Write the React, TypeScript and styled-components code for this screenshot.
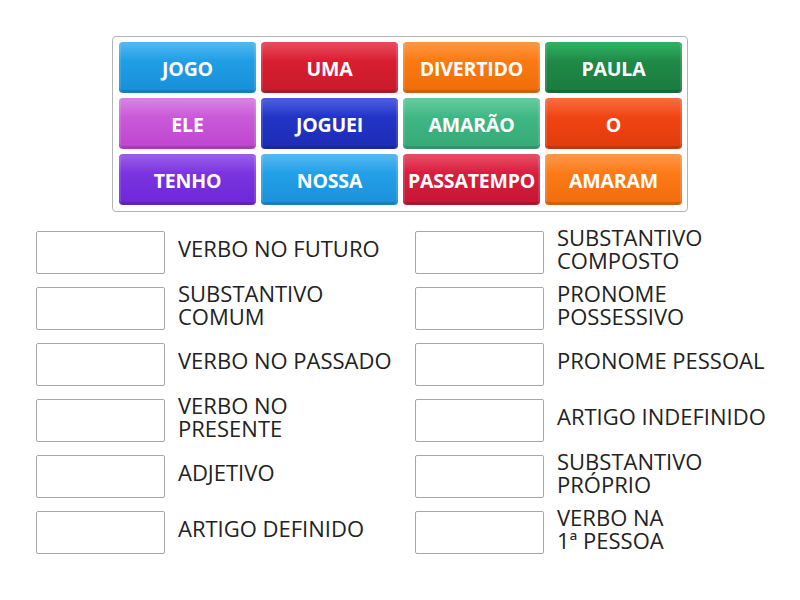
import React from "react";
import styled, { createGlobalStyle } from "styled-components";

const GlobalStyle = createGlobalStyle`
  body {
    margin: 0;
    background: #ffffff;
    font-family: "Open Sans", "Liberation Sans", sans-serif;
  }
`;

const Page = styled.div`
  width: 800px;
  height: 600px;
  display: flex;
  flex-direction: column;
  align-items: center;
  padding-top: 36px;
  box-sizing: border-box;
`;

const Bank = styled.div`
  width: 576px;
  box-sizing: border-box;
  border: 1px solid #b4b4b4;
  border-radius: 4px;
  padding: 5px 5px 6px 6px;
  display: grid;
  grid-template-columns: repeat(4, 137px);
  grid-auto-rows: 51px;
  gap: 5px;
`;

const Tile = styled.div<{ $color: string; $light: string; $dark: string }>`
  display: flex;
  align-items: center;
  justify-content: center;
  border-radius: 4px;
  background: linear-gradient(to bottom, ${(p) => p.$light} 0%, ${(p) => p.$color} 35%, ${(p) => p.$dark} 100%);
  border-top: 2px solid ${(p) => p.$light};
  box-shadow: inset 0 -3px 0 rgba(0, 0, 0, 0.12), inset 2px 0 0 rgba(255, 255, 255, 0.12),
    inset -2px 0 0 rgba(255, 255, 255, 0.12);
  box-sizing: border-box;
  color: #ffffff;
  font-weight: 700;
  font-size: 19.5px;
  letter-spacing: -0.2px;
  white-space: nowrap;
`;

const Targets = styled.div`
  margin-top: 19px;
  width: 728px;
  display: grid;
  grid-template-columns: 349px 349px;
  column-gap: 30px;
  row-gap: 13px;
  grid-auto-flow: column;
  grid-template-rows: repeat(6, 43px);
`;

const Row = styled.div`
  display: flex;
  align-items: center;
`;

const Slot = styled.div`
  width: 129px;
  height: 43px;
  flex: none;
  box-sizing: border-box;
  border: 1px solid #a8a8a8;
  border-radius: 2px;
  background: #fff;
`;

const Label = styled.div`
  margin-left: 13px;
  margin-top: -8px;
  font-size: 22px;
  line-height: 23px;
  color: #222222;
  white-space: nowrap;
`;

const tiles = [
  { t: "JOGO", c: "#1f9ee6", l: "#4fb6f0", d: "#178ed8" },
  { t: "UMA", c: "#d81e30", l: "#e8485a", d: "#c81a2c" },
  { t: "DIVERTIDO", c: "#fb7a12", l: "#fd9540", d: "#ef6c08" },
  { t: "PAULA", c: "#1f8a48", l: "#2fb060", d: "#1a7a3e" },
  { t: "ELE", c: "#c95ad8", l: "#d880e4", d: "#bf44d0" },
  { t: "JOGUEI", c: "#2234c6", l: "#4a5ae0", d: "#1c2cb4" },
  { t: "AMARÃO", c: "#3fb784", l: "#66c99e", d: "#36a876" },
  { t: "O", c: "#f04412", l: "#f86a3e", d: "#e03c0c" },
  { t: "TENHO", c: "#7b34e0", l: "#985ce8", d: "#6e26d6" },
  { t: "NOSSA", c: "#22a0e8", l: "#52b6f0", d: "#1a90d8" },
  { t: "PASSATEMPO", c: "#d81e3e", l: "#e84a64", d: "#c41634" },
  { t: "AMARAM", c: "#fd7a18", l: "#fe9646", d: "#f06c0c" },
];

const labels = [
  ["VERBO NO FUTURO"],
  ["SUBSTANTIVO", "COMUM"],
  ["VERBO NO PASSADO"],
  ["VERBO NO", "PRESENTE"],
  ["ADJETIVO"],
  ["ARTIGO DEFINIDO"],
  ["SUBSTANTIVO", "COMPOSTO"],
  ["PRONOME", "POSSESSIVO"],
  ["PRONOME PESSOAL"],
  ["ARTIGO INDEFINIDO"],
  ["SUBSTANTIVO", "PRÓPRIO"],
  ["VERBO NA", "1ª PESSOA"],
];

export default function App() {
  return (
    <>
      <GlobalStyle />
      <Page>
        <Bank>
          {tiles.map((x) => (
            <Tile key={x.t} $color={x.c} $light={x.l} $dark={x.d}>
              {x.t}
            </Tile>
          ))}
        </Bank>
        <Targets>
          {labels.map((lines, i) => (
            <Row key={i}>
              <Slot />
              <Label>
                {lines.map((line, j) => (
                  <div key={j}>{line}</div>
                ))}
              </Label>
            </Row>
          ))}
        </Targets>
      </Page>
    </>
  );
}
